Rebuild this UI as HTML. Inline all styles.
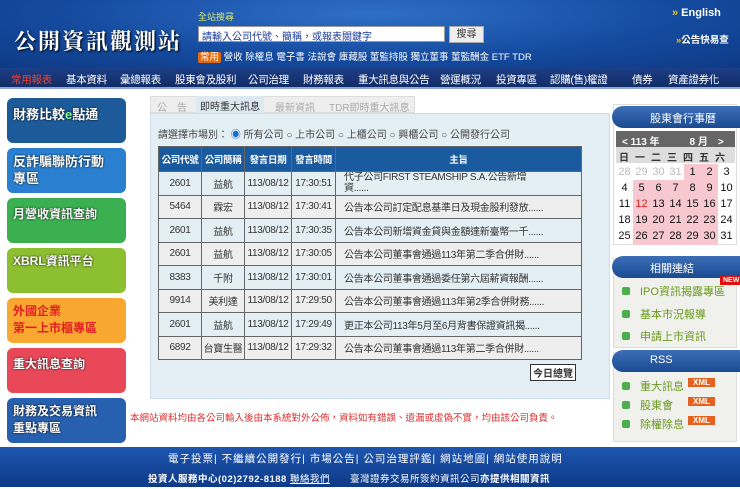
<!DOCTYPE html>
<html><head><meta charset="utf-8"><style>
*{margin:0;padding:0;box-sizing:border-box}
body{width:740px;height:489px;overflow:hidden;background:#fff;font-family:"Liberation Sans","Noto Sans CJK TC",sans-serif;font-size:11px;color:#333;position:relative}
.abs{position:absolute}
#hdr{left:0;top:0;width:740px;height:68px;background:radial-gradient(ellipse at 50% 20%,#2f6fc8,#144a9e 60%,#0e3a85);}
#nav{left:0;top:68px;width:740px;height:21px;background:linear-gradient(#1d3f86,#112c66);border-bottom:2px solid #8aa7d8}
#nav span{position:absolute;top:4px;color:#fff;font-size:10.5px;letter-spacing:-.3px}
.btn{position:absolute;left:7px;width:119px;height:45px;border-radius:6px;color:#fff;font-weight:bold;font-size:13px;line-height:17px;padding:5px 6px;letter-spacing:0;text-shadow:0 0 2px #000;white-space:nowrap;overflow:hidden}
table{border-collapse:collapse;position:absolute;left:158px;top:146px;width:424px;table-layout:fixed}
td,th{border:1px solid #666;text-align:center;font-size:10px;height:23.5px;white-space:nowrap;overflow:hidden;letter-spacing:-.3px}
th{background:#1a5a9e;color:#fff;height:25px;font-size:9.5px}
tr:nth-child(odd) td{background:#eee}
td.l{text-align:left;padding-left:8px}
.side{position:absolute;left:613px;width:124px;background:#f0f0ec;border:1px solid #ddd}
.sh{position:absolute;left:612px;width:128px;height:22px;border-radius:11px 0 0 11px;background:linear-gradient(#3d6fb8,#1a4a90);color:#fff;font-size:11px;padding:4px 0 0 38px}
.lk{position:absolute;left:622px;color:#6a9a20;font-size:11px}
.lk:before{content:"";display:inline-block;width:8px;height:8px;background:#4cae4c;border-radius:2px;margin-right:10px}
.xml{position:absolute;left:688px;width:27px;height:9px;background:#e5621e;color:#fff;font-size:8px;font-weight:bold;text-align:center;line-height:9px}
.cal{position:absolute;font-size:11px;width:17px;text-align:center}
</style></head><body>
<div id="hdr" class="abs">
<div class="abs" style="left:14px;top:25px;color:#fff;font-size:22px;font-family:'Noto Serif CJK SC',serif;font-weight:bold;letter-spacing:2px;text-shadow:1px 1px 2px #000">公開資訊觀測站</div>
<div class="abs" style="left:198px;top:10px;color:#d8e86a;font-size:9px">全站搜尋</div>
<div class="abs" style="left:198px;top:26px;width:247px;height:16px;background:#fff;border:1px solid #999;font-size:10px;color:#1a3a9a;padding:1px 3px">請輸入公司代號、簡稱，或報表關鍵字</div>
<div class="abs" style="left:449px;top:26px;width:35px;height:17px;background:#eee;border:1px solid #aaa;font-size:10px;text-align:center;line-height:15px">搜尋</div>
<div class="abs" style="left:198px;top:49px;font-size:9.5px;color:#fff"><span style="background:#e46a10;padding:0 2px;border-radius:2px">常用</span> 營收 除權息 電子書 法說會 庫藏股 董監持股 獨立董事 董監酬金 ETF TDR</div>
<div class="abs" style="left:672px;top:7px;color:#fff;font-weight:bold;font-size:11px"><span style="color:#f0c020">»</span> English</div>
<div class="abs" style="left:676px;top:32px;color:#fff;font-weight:bold;font-size:9.5px"><span style="color:#f0c020">»</span>公告快易查</div>
</div>
<div id="nav" class="abs">
<span style="left:11px;color:#e84030">常用報表</span><span style="left:66px">基本資料</span><span style="left:120px">彙總報表</span><span style="left:175px">股東會及股利</span><span style="left:248px">公司治理</span><span style="left:303px">財務報表</span><span style="left:358px">重大訊息與公告</span><span style="left:440px">營運概況</span><span style="left:496px">投資專區</span><span style="left:550px">認購(售)權證</span><span style="left:632px">債券</span><span style="left:668px">資產證券化</span>
</div>
<div class="btn" style="top:98px;background:#1d5a9a;padding-top:8px">財務比較<span style="color:#8f8">e</span>點通</div>
<div class="btn" style="top:148px;background:#2a7fd0">反詐騙聯防行動<br>專區</div>
<div class="btn" style="top:198px;background:#3ab050;font-size:12px;padding-top:8px">月營收資訊查詢</div>
<div class="btn" style="top:248px;background:#8cc030;font-size:12px">XBRL資訊平台</div>
<div class="btn" style="top:298px;background:#f8a830;color:#e02020;text-shadow:none;font-size:12px">外國企業<br>第一上市櫃專區</div>
<div class="btn" style="top:348px;background:#e84858;font-size:12px;padding-top:8px">重大訊息查詢</div>
<div class="btn" style="top:398px;background:#2860b0;font-size:12px">財務及交易資訊<br>重點專區</div>

<div class="abs" style="left:150px;top:96px;width:265px;height:17px;background:#eee;border:1px solid #ddd;font-size:10px;color:#aaa">
<span class="abs" style="left:6px;top:2px">公　告</span>
<span class="abs" style="left:45px;top:-1px;width:68px;height:18px;background:#dce9f0;color:#333;padding:2px 4px">即時重大訊息</span>
<span class="abs" style="left:124px;top:2px">最新資訊</span>
<span class="abs" style="left:178px;top:2px">TDR即時重大訊息</span></div>
<div class="abs" style="left:150px;top:113px;width:460px;height:286px;background:#e3eff5;border:1px solid #cde"></div>
<div class="abs" style="left:158px;top:126px;font-size:10px;color:#444">請選擇市場別： <span style="color:#1a6ad0">◉</span> 所有公司 ○ 上市公司 ○ 上櫃公司 ○ 興櫃公司 ○ 公開發行公司</div>
<table>
<colgroup><col style="width:43px"><col style="width:43px"><col style="width:47px"><col style="width:44px"><col></colgroup>
<tr><th>公司代號</th><th>公司簡稱</th><th>發言日期</th><th>發言時間</th><th>主旨</th></tr>
<tr><td>2601</td><td>益航</td><td>113/08/12</td><td>17:30:51</td><td class="l" style="line-height:11px">代子公司FIRST STEAMSHIP S.A.公告新增<br>資......</td></tr>
<tr><td>5464</td><td>霖宏</td><td>113/08/12</td><td>17:30:41</td><td class="l">公告本公司訂定配息基準日及現金股利發放......</td></tr>
<tr><td>2601</td><td>益航</td><td>113/08/12</td><td>17:30:35</td><td class="l">公告本公司新增資金貸與金額達新臺幣一千......</td></tr>
<tr><td>2601</td><td>益航</td><td>113/08/12</td><td>17:30:05</td><td class="l">公告本公司董事會通過113年第二季合併財......</td></tr>
<tr><td>8383</td><td>千附</td><td>113/08/12</td><td>17:30:01</td><td class="l">公告本公司董事會通過委任第六屆薪資報酬......</td></tr>
<tr><td>9914</td><td>美利達</td><td>113/08/12</td><td>17:29:50</td><td class="l">公告本公司董事會通過113年第2季合併財務......</td></tr>
<tr><td>2601</td><td>益航</td><td>113/08/12</td><td>17:29:49</td><td class="l">更正本公司113年5月至6月背書保證資訊揭......</td></tr>
<tr><td>6892</td><td>台寶生醫</td><td>113/08/12</td><td>17:29:32</td><td class="l">公告本公司董事會通過113年第二季合併財......</td></tr>
</table>
<div class="abs" style="left:530px;top:364px;border:1px solid #333;background:#fff;font-size:10px;padding:0 2px;font-weight:bold">今日總覽</div>
<div class="abs" style="left:130px;top:410px;color:#e03030;font-size:9.5px">本網站資料均由各公司輸入後由本系統對外公佈，資料如有錯誤、遺漏或虛偽不實，均由該公司負責。</div>

<div class="side" style="top:104px;height:141px;background:#fff"></div>
<div class="sh" style="top:106px">股東會行事曆</div>
<div class="abs" style="left:616px;top:131px;width:119px;height:16px;background:#666;color:#fff;font-size:10px;font-weight:bold;padding:2px 6px">&lt; 113 年　　　8 月　&gt;</div>
<div class="abs" style="left:616px;top:147px;width:119px;height:16px;background:#ddd;font-size:10px;font-weight:bold;padding:2px 3px;letter-spacing:6px">日一二三四五六</div>
<div class="abs" style="left:684px;top:164px;width:34px;height:16px;background:#f8c8d0"></div>
<div class="abs" style="left:633px;top:180px;width:85px;height:65px;background:#f8c8d0"></div>
<div id="cal"></div>
<div class="side" style="top:258px;height:90px"></div>
<div class="sh" style="top:256px">相關連結</div>
<div class="abs" style="left:720px;top:276px;background:#e01010;color:#fff;font-size:7px;font-weight:bold;padding:1px 3px">NEW</div>
<div class="lk" style="top:283px">IPO資訊揭露專區</div>
<div class="lk" style="top:306px">基本市況報導</div>
<div class="lk" style="top:328px">申請上市資訊</div>
<div class="side" style="top:352px;height:90px"></div>
<div class="sh" style="top:350px">RSS</div>
<div class="lk" style="top:378px">重大訊息</div>
<div class="lk" style="top:397px">股東會</div>
<div class="lk" style="top:416px">除權除息</div>
<div class="xml" style="top:378px">XML</div><div class="xml" style="top:397px">XML</div><div class="xml" style="top:416px">XML</div>

<div class="abs" style="left:0;top:447px;width:740px;height:40px;background:linear-gradient(#1e56b0,#0e3a88);color:#fff">
<div class="abs" style="left:168px;top:4px;font-size:10.5px;letter-spacing:1px">電子投票| 不繼續公開發行| 市場公告| 公司治理評鑑| 網站地圖| 網站使用說明</div>
<div class="abs" style="left:148px;top:24px;font-size:9.5px;font-weight:bold;letter-spacing:.5px">投資人服務中心(02)2792-8188 <u style="font-weight:normal">聯絡我們</u>　　<span style="font-weight:normal">臺灣證券交易所簽約資訊公司</span>亦提供相關資訊</div>
</div>
<script>
var d=[[28,29,30,31,1,2,3],[4,5,6,7,8,9,10],[11,12,13,14,15,16,17],[18,19,20,21,22,23,24],[25,26,27,28,29,30,31]],h='';
for(var r=0;r<5;r++)for(var c=0;c<7;c++){var col=(r==0&&c<4)?'#bbb':(r==2&&c==1?'#e02020':'#111');h+='<div class="cal" style="left:'+(616+c*17)+'px;top:'+(166+r*16)+'px;color:'+col+'">'+d[r][c]+'</div>';}
document.getElementById('cal').innerHTML=h;
</script>
</body></html>
